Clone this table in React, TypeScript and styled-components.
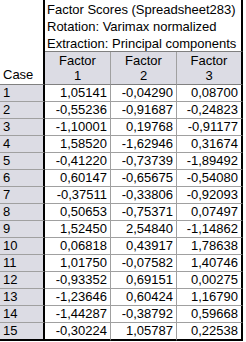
import React from 'react';
import styled, { createGlobalStyle } from 'styled-components';

const GlobalStyle = createGlobalStyle`
  html, body {
    margin: 0;
    padding: 0;
    background: #ffffff;
  }
  body {
    font-family: "Liberation Sans", Arial, sans-serif;
    font-size: 12px;
    color: #000000;
  }
`;

const Sheet = styled.div`
  display: grid;
  grid-template-columns: 45px 66px 66px 66px;
  width: 243px;
  box-sizing: border-box;
`;

const CaseHead = styled.div`
  grid-row: 1 / span 2;
  grid-column: 1;
  display: flex;
  align-items: flex-end;
  padding: 0 0 2px 3px;
  border-right: 2px solid #000000;
  border-bottom: 1px solid #808080;
  box-sizing: border-box;
  height: 85px;
  font-size: 13px;
`;

const Title = styled.div`
  grid-column: 2 / span 3;
  display: flex;
  flex-direction: column;
  height: 52px;
  padding: 1px 0 0 2px;
  border-right: 2px solid #000000;
  border-bottom: 1px solid #808080;
  box-sizing: border-box;
  font-size: 13px;
  line-height: 17px;
  white-space: nowrap;
`;

const FactorHead = styled.div<{ $last?: boolean }>`
  height: 33px;
  display: flex;
  flex-direction: column;
  align-items: center;
  justify-content: center;
  background: #dcdce4;
  border-right: ${({ $last }) => ($last ? '2px solid #000000' : '1px solid #a0a0a0')};
  border-bottom: 1px solid #808080;
  box-sizing: border-box;
  font-size: 13px;
  line-height: 15px;
`;

const CaseCell = styled.div<{ $bottom?: boolean }>`
  height: ${({ $bottom }) => ($bottom ? '18px' : '17px')};
  padding-left: 3px;
  background: #dcdce4;
  border-right: 2px solid #000000;
  border-bottom: ${({ $bottom }) => ($bottom ? '2px solid #000000' : '1px solid #a0a0a0')};
  box-sizing: border-box;
  font-size: 13px;
  line-height: 16px;
`;

const ValueCell = styled.div<{ $last?: boolean; $bottom?: boolean }>`
  height: ${({ $bottom }) => ($bottom ? '18px' : '17px')};
  padding-right: 3px;
  text-align: right;
  background: #ffffff;
  border-right: ${({ $last }) => ($last ? '2px solid #000000' : '1px solid #a0a0a0')};
  border-bottom: ${({ $bottom }) => ($bottom ? '2px solid #000000' : '1px solid #a0a0a0')};
  box-sizing: border-box;
  font-size: 13px;
  line-height: 16px;
`;

const rows: string[][] = [
  ['1,05141', '-0,04290', '0,08700'],
  ['-0,55236', '-0,91687', '-0,24823'],
  ['-1,10001', '0,19768', '-0,91177'],
  ['1,58520', '-1,62946', '0,31674'],
  ['-0,41220', '-0,73739', '-1,89492'],
  ['0,60147', '-0,65675', '-0,54080'],
  ['-0,37511', '-0,33806', '-0,92093'],
  ['0,50653', '-0,75371', '0,07497'],
  ['1,52450', '2,54840', '-1,14862'],
  ['0,06818', '0,43917', '1,78638'],
  ['1,01750', '-0,07582', '1,40746'],
  ['-0,93352', '0,69151', '0,00275'],
  ['-1,23646', '0,60424', '1,16790'],
  ['-1,44287', '-0,38792', '0,59668'],
  ['-0,30224', '1,05787', '0,22538'],
];

export default function App() {
  return (
    <>
      <GlobalStyle />
      <Sheet>
        <CaseHead>Case</CaseHead>
        <Title>
          <span>Factor Scores (Spreadsheet283)</span>
          <span>Rotation: Varimax normalized</span>
          <span>Extraction: Principal components</span>
        </Title>
        {[1, 2, 3].map((n) => (
          <FactorHead key={n} $last={n === 3}>
            <span>Factor</span>
            <span>{n}</span>
          </FactorHead>
        ))}
        {rows.map((row, i) => {
          const bottom = i === rows.length - 1;
          return (
            <React.Fragment key={i}>
              <CaseCell $bottom={bottom}>{i + 1}</CaseCell>
              {row.map((v, j) => (
                <ValueCell key={j} $last={j === 2} $bottom={bottom}>
                  {v}
                </ValueCell>
              ))}
            </React.Fragment>
          );
        })}
      </Sheet>
    </>
  );
}
